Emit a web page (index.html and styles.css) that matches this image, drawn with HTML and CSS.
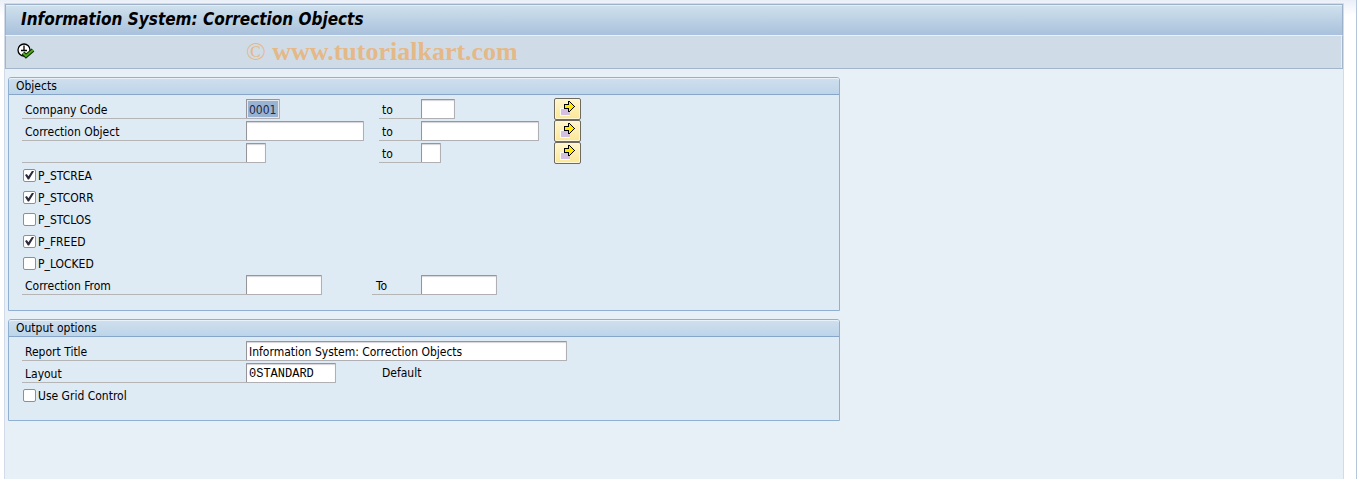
FILE: index.html
```html
<!DOCTYPE html>
<html lang="en">
<head>
    <meta charset="UTF-8">
    <meta name="viewport" content="width=device-width, initial-scale=1.0">
    <title>Information System: Correction Objects</title>
    <link rel="stylesheet" href="styles.css">
</head>
<body>

<!-- Arrow icon shared by the multiple selection buttons -->
<svg class="symbols" width="0" height="0" aria-hidden="true">
    <symbol id="arrow" viewBox="0 0 16 16" shape-rendering="crispEdges">
        <path d="M0 8h10v8H0z" fill="#fffaf0"/>
        <path d="M1 9h9v6H1z" fill="#d3bfdf"/>
        <path d="M8 1h2v1h1v1h1v1h1v1h1v1h1v1h-1v1h-1v1h-1v1h-1v1h-1v1H8V9H4V4h4z" fill="#000"/>
        <path d="M9 2h1v1h1v1h1v1h1v1h1v1h-1v1h-1v1h-1v1h-1v1H9V8H5V5h4z" fill="#ffe900"/>
    </symbol>
</svg>

<div class="window">
    <header class="title-bar">
        <h1>Information System: Correction Objects</h1>
    </header>

    <div class="toolbar">
        <button type="button" class="execute" aria-label="Execute">
            <svg width="18" height="18" viewBox="0 0 18 18">
                <circle cx="7" cy="7" r="6" fill="#fff" stroke="#000" stroke-width="1.3"/>
                <path d="M7 2.5v5M4 7.5h6" fill="none" stroke="#000" stroke-width="1.3"/>
                <path d="M6 10l3 3 7-6" fill="none" stroke="#0c2a00" stroke-width="4"/>
                <path d="M6 10l3 3 7-6" fill="none" stroke="#50a818" stroke-width="2"/>
            </svg>
        </button>
        <span class="watermark"><span class="copy">©</span> www.tutorialkart.com</span>
    </div>

    <form class="content">
        <!-- Objects -->
        <section class="group">
            <h2>Objects</h2>
            <div class="rows">
                <div class="row">
                    <label class="label" for="company">Company Code</label>
                    <input type="text" id="company" class="field w-code selected" value="0001">
                    <label class="label to" for="company-to">to</label>
                    <input type="text" id="company-to" class="field w-code">
                    <button type="button" class="multi" aria-label="Multiple selection"><svg width="16" height="16"><use href="#arrow"/></svg></button>
                </div>
                <div class="row">
                    <label class="label" for="object">Correction Object</label>
                    <input type="text" id="object" class="field w-object">
                    <label class="label to" for="object-to">to</label>
                    <input type="text" id="object-to" class="field w-object">
                    <button type="button" class="multi" aria-label="Multiple selection"><svg width="16" height="16"><use href="#arrow"/></svg></button>
                </div>
                <div class="row">
                    <label class="label" for="status"></label>
                    <input type="text" id="status" class="field w-flag">
                    <label class="label to" for="status-to">to</label>
                    <input type="text" id="status-to" class="field w-flag">
                    <button type="button" class="multi" aria-label="Multiple selection"><svg width="16" height="16"><use href="#arrow"/></svg></button>
                </div>
                <label class="check"><input type="checkbox" checked><span>P_STCREA</span></label>
                <label class="check"><input type="checkbox" checked><span>P_STCORR</span></label>
                <label class="check"><input type="checkbox"><span>P_STCLOS</span></label>
                <label class="check"><input type="checkbox" checked><span>P_FREED</span></label>
                <label class="check"><input type="checkbox"><span>P_LOCKED</span></label>
                <div class="row">
                    <label class="label" for="from">Correction From</label>
                    <input type="text" id="from" class="field w-date">
                    <label class="label" for="from-to">To</label>
                    <input type="text" id="from-to" class="field w-date">
                </div>
            </div>
        </section>

        <!-- Output options -->
        <section class="group">
            <h2>Output options</h2>
            <div class="rows">
                <div class="row">
                    <label class="label" for="title">Report Title</label>
                    <input type="text" id="title" class="field w-title" value="Information System: Correction Objects">
                </div>
                <div class="row">
                    <label class="label" for="layout">Layout</label>
                    <input type="text" id="layout" class="field w-layout mono" value="0STANDARD">
                    <span class="text">Default</span>
                </div>
                <label class="check"><input type="checkbox"><span>Use Grid Control</span></label>
            </div>
        </section>
    </form>
</div>

</body>
</html>
```
FILE: styles.css
```css
* {
    box-sizing: border-box;
}

body {
    margin: 0;
    padding: 4px 13px 0 5px;
    min-height: 100vh;
    display: flex;
    background: linear-gradient(#eaeff7, #fff 16px);
    border-right: 1px solid #b5c5dc;
    font-family: "DejaVu Sans Condensed", Tahoma, "Noto Sans", sans-serif;
    font-size: 12px;
    color: #000;
}

.symbols {
    position: absolute;
}

.window {
    flex: 1;
    background: #e7eff7;
    box-shadow: 0 0 0 1px #d3dbe9;
}

.title-bar {
    height: 32px;
    padding: 0 15px;
    display: flex;
    align-items: center;
    background: linear-gradient(#d0e1ed, #a9c1dc);
    border: 1px solid #9db1cb;
    border-bottom: 1px solid #e9f3fa;
    box-shadow: inset 0 1px #e3eef7;
}

h1 {
    margin: 0 0 3px;
    font-size: 17px;
    line-height: 20px;
    font-style: italic;
    font-weight: bold;
}

.toolbar {
    height: 33px;
    padding-left: 10px;
    display: flex;
    align-items: center;
    background: #cfdce7;
    border: 1px solid #a3b5cb;
    border-top: 0;
    box-shadow: inset -1px 0 #e3eef7;
}

.execute {
    width: 20px;
    height: 20px;
    padding: 1px;
    border: 0;
    background: none;
    line-height: 0;
}

.watermark {
    margin-left: 210px;
    font-family: "Liberation Serif", serif;
    font-size: 26px;
    font-weight: bold;
    line-height: 32px;
    color: #e5b887;
}

.copy {
    font-weight: normal;
}

.content {
    padding: 8px 3px;
    display: flex;
    flex-direction: column;
    gap: 8px;
}

.group {
    max-width: 832px;
    background: #deeaf4;
    border: 1px solid #91afd0;
    border-radius: 3px 3px 0 0;
}

h2 {
    margin: 0;
    padding: 0 7px;
    height: 17px;
    line-height: 17px;
    font-size: 12px;
    font-weight: normal;
    background: linear-gradient(#cfdfee, #bdd5e9);
    border-bottom: 1px solid #86a5c9;
    border-radius: 2px 2px 0 0;
    box-shadow: inset 0 1px #e9f2f9;
}

.rows {
    padding: 3px 13px 14px;
}

.row {
    height: 22px;
    display: grid;
    grid-template-columns: 224px 126px 49px 133px 27px;
    align-items: center;
}

.label {
    height: 20px;
    padding-left: 3px;
    line-height: 22px;
    border-bottom: 1px solid #b5b5b5;
}

.label + .field + .label {
    padding-left: 4px;
}

.label + .field + .to {
    width: 42px;
    padding-left: 3px;
    justify-self: end;
}

.text {
    padding-left: 10px;
    line-height: 22px;
}

.field {
    height: 20px;
    padding: 2px 2px 0;
    font: inherit;
    color: #000;
    background: #fff;
    border: 1px solid #b0b0b4;
    border-top: 1px solid #96969a;
    border-left-color: #96969a;
    border-radius: 1px;
    box-shadow: inset 0 1px 1px #d5d5da;
}

.w-flag {
    width: 20px;
}

.w-code {
    width: 34px;
}

.w-date {
    width: 76px;
}

.w-layout {
    width: 90px;
}

.w-object {
    width: 118px;
}

.w-title {
    width: 321px;
}

.mono {
    font-family: "Liberation Mono", monospace;
}

.selected {
    color: #1c2a44;
    background: #9ab3d2;
    box-shadow: inset 0 0 0 1px #e4e8ef;
}

.multi {
    width: 27px;
    height: 22px;
    padding: 0 0 2px;
    display: flex;
    align-items: center;
    justify-content: center;
    background: linear-gradient(#fff6cf, #fbe795);
    border: 1px solid #6e6a60;
    border-radius: 2px;
    box-shadow: inset 0 0 0 1px #fdf6d8;
}

.check {
    width: max-content;
    height: 22px;
    padding-left: 1px;
    display: flex;
    align-items: center;
    gap: 2px;
}

.check span {
    padding-top: 2px;
}

.check input {
    appearance: none;
    width: 13px;
    height: 13px;
    margin: 0;
    display: grid;
    place-items: center;
    background: #fff;
    border: 1px solid #8f8f8f;
    border-radius: 2px;
}

.check input:checked::before {
    content: "";
    width: 9px;
    height: 9px;
    background: #2b2b3c;
    clip-path: polygon(0 50%, 20% 40%, 38% 65%, 80% 0, 100% 8%, 45% 100%, 32% 100%);
}
```
